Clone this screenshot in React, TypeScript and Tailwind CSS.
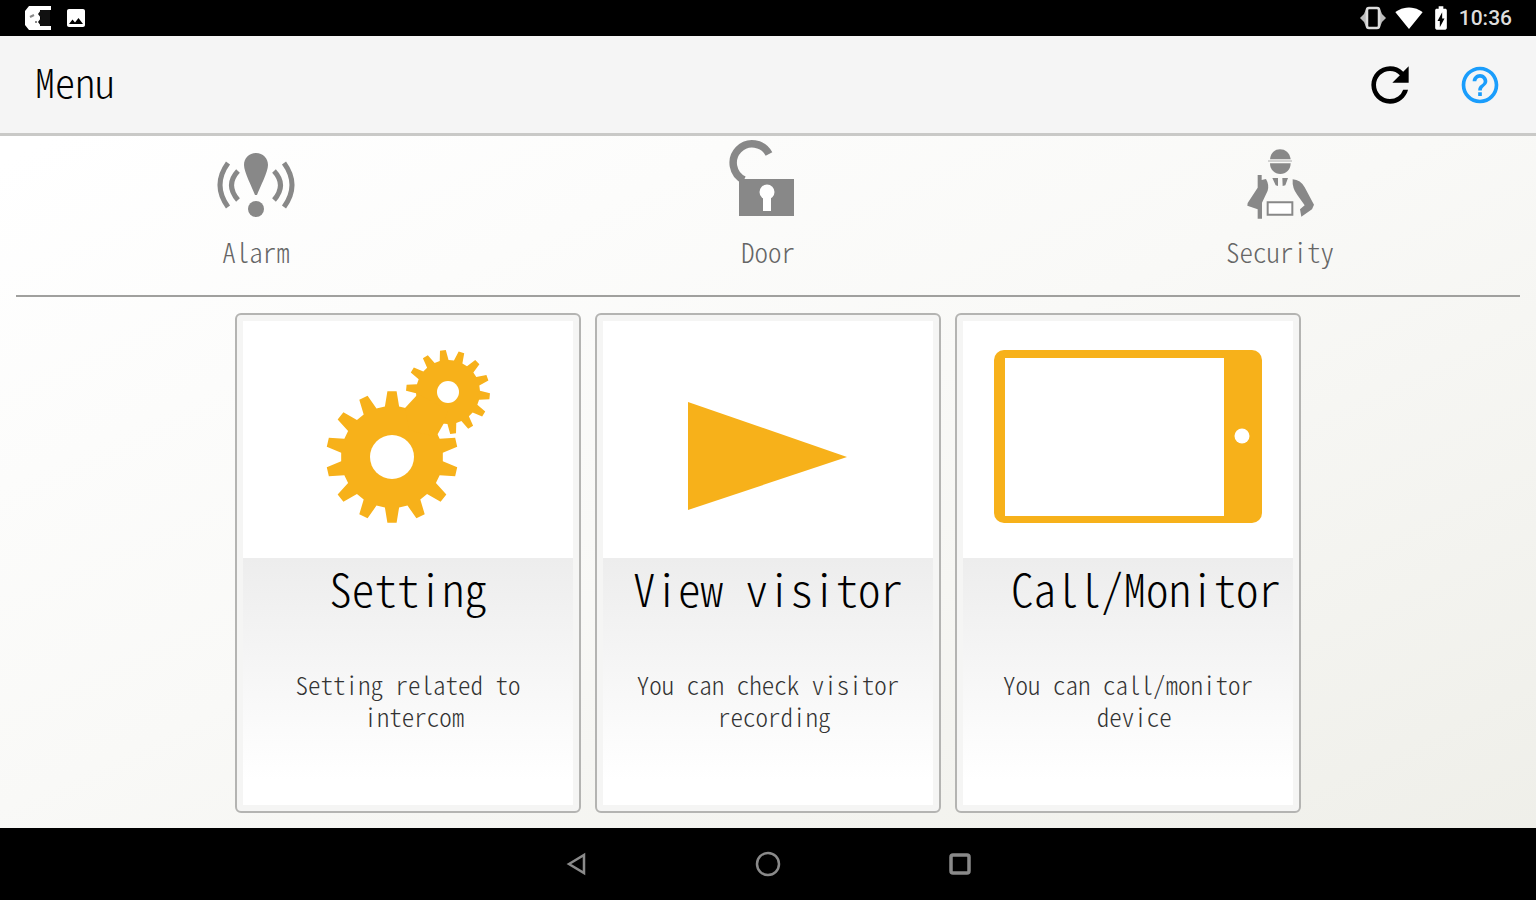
import type { ReactNode } from 'react';
import { MdBatteryChargingFull, MdHelpOutline, MdImage, MdRefresh, MdSignalWifi4Bar } from 'react-icons/md';

const ORANGE = '#f7b11a';

// skip holds the indexes of teeth that disappear where the two gears meet
const gearPath = (cx: number, cy: number, root: number, tip: number, start: number, skip: number[]) => {
  const teeth = 14;
  const step = 360 / teeth;
  const point = (radius: number, deg: number) => {
    const rad = (deg * Math.PI) / 180;
    return `${(cx + radius * Math.cos(rad)).toFixed(2)} ${(cy + radius * Math.sin(rad)).toFixed(2)}`;
  };
  const points: string[] = [];
  for (let i = 0; i < teeth; i++) {
    const a = start + i * step;
    const top = skip.includes(i) ? root : tip;
    points.push(point(root, a - 8), point(top, a - 4), point(top, a + 4), point(root, a + 8));
  }
  return `M${points.join('L')}Z`;
};

const GearsIcon = () => (
  <svg viewBox="0 0 330 237" className="w-full" fill={ORANGE} aria-hidden="true">
    <path d={gearPath(149, 136, 51, 66, -90, [1, 2])} />
    <path d={gearPath(205, 71, 32, 42, -97, [8, 9, 10])} />
    <path d="M175 73L162 87L166 109L193 116L201 102L205 89Z" />
    <circle cx="149" cy="136" r="22" fill="#fff" />
    <circle cx="205" cy="71" r="11" fill="#fff" />
  </svg>
);

const PlayIcon = () => (
  <svg viewBox="0 0 330 237" className="w-full" fill={ORANGE} aria-hidden="true">
    <path d="M85 81L244 136L85 189Z" />
  </svg>
);

const TabletIcon = () => (
  <svg viewBox="0 0 330 237" className="w-full" fill={ORANGE} aria-hidden="true">
    <rect x="31" y="29" width="268" height="173" rx="10" />
    <rect x="42" y="37" width="219" height="158" fill="#fff" />
    <circle cx="279" cy="115" r="7.5" fill="#fff" />
  </svg>
);

const AlarmIcon = () => (
  <svg viewBox="0 0 80 80" className="size-20" fill="#888" aria-hidden="true">
    <path d="M40 13C47 13 52 18 52 25C52 32 44 47 41 55H39C36 47 28 32 28 25C28 18 33 13 40 13Z" />
    <circle cx="40" cy="69" r="8" />
    <g fill="none" stroke="#888" strokeWidth="5">
      <path d="M12 23Q-4 45 12 67M22 31Q9 45 22 60M68 23Q84 45 68 67M58 31Q71 45 58 60" />
    </g>
  </svg>
);

const DoorIcon = () => (
  <svg viewBox="3 0 80 80" className="size-20" fill="#888" aria-hidden="true">
    <path d="M44 14A19 19 0 1 0 19 40" fill="none" stroke="#888" strokeWidth="7.5" />
    <rect x="14" y="39" width="55" height="37" />
    <circle cx="42" cy="52" r="7.5" fill="#fff" />
    <rect x="38" y="56" width="8" height="15" fill="#fff" />
  </svg>
);

const SecurityIcon = () => (
  <svg viewBox="90 0 240 240" className="size-20" fill="#888" aria-hidden="true">
    <path d="M180 58C182 38 195 28 210 28C226 28 239 38 242 58Z" />
    <path d="M180 70H242C242 90 228 102 211 102C194 102 180 90 180 70Z" />
    <path d="M174 63H246" stroke="#aaa" strokeWidth="3" />
    <path d="M143 105H155V120L168 117Q178 134 173 152L156 188V236H143V208L112 197L113 189L143 143Z" />
    <path d="M248 118Q272 120 284 142L312 194L306 208L274 230L270 208L284 196L262 165Q246 145 248 118Z" />
    <path d="M187 114H204V138L197 136ZM217 114H234L226 136L218 138Z" />
    <path d="M173 187H247V224H173Z" fill="#fff" stroke="#888" strokeWidth="6" />
  </svg>
);

const VibrateIcon = () => (
  <svg viewBox="0 0 28 28" className="mr-1 size-7" fill="#bbb" aria-hidden="true">
    <path d="M7 5L5 10L1 14L5 18L7 23ZM21 5L23 10L27 14L23 18L21 23Z" />
    <rect x="8" y="4" width="12" height="20" rx="2" fill="#000" stroke="#ddd" strokeWidth="2.5" />
  </svg>
);

const actions = [
  { label: 'Alarm', icon: <AlarmIcon /> },
  { label: 'Door', icon: <DoorIcon /> },
  { label: 'Security', icon: <SecurityIcon /> },
];

type CardProps = { title: string; text: string; icon: ReactNode; titleClass?: string };

const cards: CardProps[] = [
  { title: 'Setting', text: 'Setting related to\n intercom', icon: <GearsIcon /> },
  { title: 'View visitor', text: 'You can check visitor\n recording', icon: <PlayIcon /> },
  { title: 'Call/Monitor', text: 'You can call/monitor\n device', icon: <TabletIcon />, titleClass: 'pl-9' },
];

const MenuCard = ({ title, text, icon, titleClass = '' }: CardProps) => (
  <button
    type="button"
    className="flex w-[346px] flex-col rounded-md border-2 border-[#b4b4b2] bg-[#f5f5f4] p-1.5 text-center text-black"
  >
    <span className="block w-full bg-white">{icon}</span>
    <span className="flex w-full flex-1 flex-col bg-linear-to-b from-[#ededed] to-white to-90%">
      <span className={`text-[45px] leading-15 whitespace-nowrap ${titleClass}`}>{title}</span>
      <span className="mt-[50px] text-[25px] leading-8 whitespace-pre text-[#333]">{text}</span>
    </span>
  </button>
);

const StatusBar = () => (
  <div className="flex h-9 items-center justify-between bg-black px-6 text-white">
    <div className="flex items-center gap-3">
      <svg viewBox="0 0 28 26" className="h-[26px] w-7" aria-hidden="true">
        <path d="M5 1H27V5H16V21H27V25H5L1 20V6Z" fill="#fff" />
        <path d="M17 5H26V21H17L14 17L17 13L14 9Z" fill="#111" />
        <path d="M6 12L10 10M11 17H13" stroke="#888" strokeWidth="2" />
      </svg>
      <MdImage className="size-6" />
    </div>
    <div className="flex items-center gap-1">
      <VibrateIcon />
      <MdSignalWifi4Bar className="size-7" />
      <MdBatteryChargingFull className="size-7" />
      <span className="font-[Roboto,sans-serif] text-[21px] leading-9 font-medium text-[#ddd]">10:36</span>
    </div>
  </div>
);

const NavBar = () => (
  <nav className="flex h-[72px] items-center justify-center gap-[164px] bg-black text-[#8a8a8a]">
    <button type="button" aria-label="Back">
      <svg viewBox="0 0 28 28" className="size-7" fill="none" stroke="currentColor" strokeWidth="2.5">
        <path d="M7 14L22 5V23Z" />
      </svg>
    </button>
    <button type="button" aria-label="Home">
      <svg viewBox="0 0 28 28" className="size-7" fill="none" stroke="currentColor" strokeWidth="2.5">
        <circle cx="14" cy="14" r="11" />
      </svg>
    </button>
    <button type="button" aria-label="Recent apps">
      <svg viewBox="0 0 28 28" className="size-7" fill="none" stroke="currentColor" strokeWidth="3.5">
        <rect x="5" y="5" width="18" height="18" rx="2" />
      </svg>
    </button>
  </nav>
);

export default function App() {
  return (
    <div className="flex min-h-screen flex-col bg-linear-[155deg] from-white from-10% via-[#f9f9f7] via-50% to-[#eeeee8] font-['Noto_Sans_CJK_JP','Liberation_Mono',monospace] font-light [font-feature-settings:'hwid']">
      <StatusBar />
      <header className="flex h-[100px] items-center justify-between border-b-3 border-[#c9c9c7] bg-[#f5f5f5] pr-[34px] pl-[35px]">
        <h1 className="pb-2 text-[40px] leading-12 text-black">Menu</h1>
        <div className="flex items-center gap-10">
          <button type="button" aria-label="Refresh">
            <MdRefresh className="size-14 text-black" />
          </button>
          <button type="button" aria-label="Help">
            <MdHelpOutline className="size-11 text-[#1a9dfc]" />
          </button>
        </div>
      </header>
      <section className="grid grid-cols-3 pt-1 pb-[23px]">
        {actions.map(({ label, icon }) => (
          <button key={label} type="button" className="flex flex-col items-center gap-3 text-[#666]">
            {icon}
            <span className="text-[27px] leading-10">{label}</span>
          </button>
        ))}
      </section>
      <hr className="mx-4 border-t-2 border-[#a0a09e]" />
      <main className="flex flex-1 justify-center gap-3.5 pt-4 pb-[15px]">
        {cards.map((card) => (
          <MenuCard key={card.title} {...card} />
        ))}
      </main>
      <NavBar />
    </div>
  );
}
